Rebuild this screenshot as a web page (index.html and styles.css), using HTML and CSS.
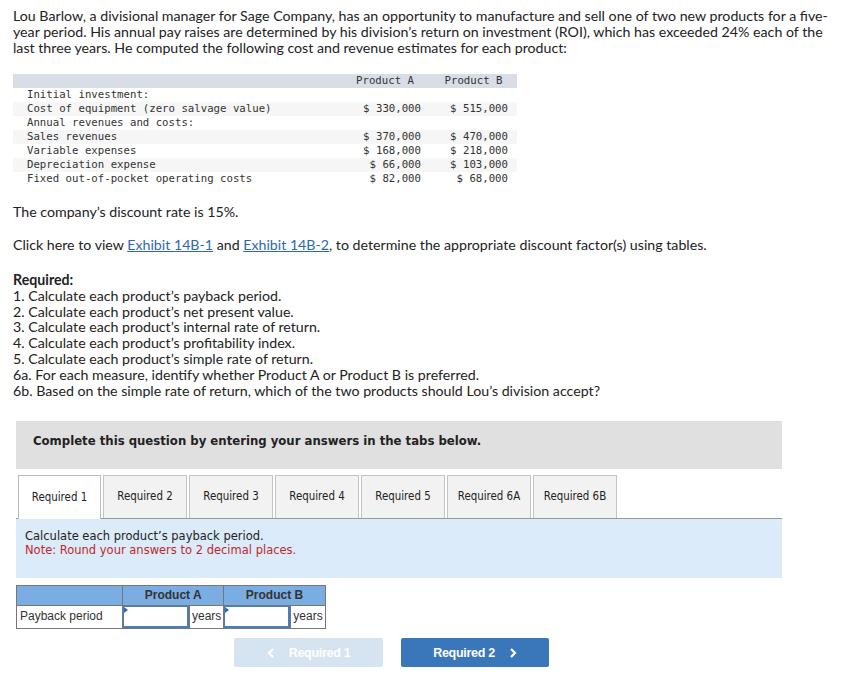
FILE: index.html
```html
<!DOCTYPE html>
<html lang="en">
<head>
<meta charset="utf-8">
<title>Payback period</title>
<link rel="stylesheet" href="styles.css">
</head>
<body>
<div class="page">
  <p class="intro">Lou Barlow, a divisional manager for Sage Company, has an opportunity to manufacture and sell one of two new products for a five-year period. His annual pay raises are determined by his division’s return on investment (ROI), which has exceeded 24% each of the last three years. He computed the following cost and revenue estimates for each product:</p>

  <table class="data">
    <colgroup><col class="c-label"><col class="c-a"><col class="c-b"></colgroup>
    <thead>
      <tr><th></th><th>Product A</th><th>Product B</th></tr>
    </thead>
    <tbody>
      <tr><td>Initial investment:</td><td></td><td></td></tr>
      <tr class="alt"><td>Cost of equipment (zero salvage value)</td><td class="num">$ 330,000</td><td class="num">$ 515,000</td></tr>
      <tr><td>Annual revenues and costs:</td><td></td><td></td></tr>
      <tr class="alt"><td>Sales revenues</td><td class="num">$ 370,000</td><td class="num">$ 470,000</td></tr>
      <tr><td>Variable expenses</td><td class="num">$ 168,000</td><td class="num">$ 218,000</td></tr>
      <tr class="alt"><td>Depreciation expense</td><td class="num">$ 66,000</td><td class="num">$ 103,000</td></tr>
      <tr><td>Fixed out-of-pocket operating costs</td><td class="num">$ 82,000</td><td class="num">$ 68,000</td></tr>
    </tbody>
  </table>

  <p class="rate">The company’s discount rate is 15%.</p>
  <p class="click">Click here to view <a href="#">Exhibit 14B-1</a> and <a href="#">Exhibit 14B-2</a>, to determine the appropriate discount factor(s) using tables.</p>

  <div class="required">
    <div class="req-title">Required:</div>
    <div>1. Calculate each product’s payback period.</div>
    <div>2. Calculate each product’s net present value.</div>
    <div>3. Calculate each product’s internal rate of return.</div>
    <div>4. Calculate each product’s profitability index.</div>
    <div>5. Calculate each product’s simple rate of return.</div>
    <div>6a. For each measure, identify whether Product A or Product B is preferred.</div>
    <div>6b. Based on the simple rate of return, which of the two products should Lou’s division accept?</div>
  </div>

  <div class="question">
    <div class="banner">Complete this question by entering your answers in the tabs below.</div>

    <div class="tabs">
      <div class="tab active">Required 1</div>
      <div class="tab">Required 2</div>
      <div class="tab">Required 3</div>
      <div class="tab">Required 4</div>
      <div class="tab">Required 5</div>
      <div class="tab">Required 6A</div>
      <div class="tab">Required 6B</div>
    </div>

    <div class="instructions">
      <div>Calculate each product’s payback period.</div>
      <div class="note">Note: Round your answers to 2 decimal places.</div>
    </div>

    <table class="answer">
      <thead>
        <tr><th class="a-label"></th><th colspan="2">Product A</th><th colspan="2">Product B</th></tr>
      </thead>
      <tbody>
        <tr>
          <td class="a-label">Payback period</td>
          <td class="a-input"><div class="field"><input type="text"></div></td>
          <td class="a-unit">years</td>
          <td class="a-input"><div class="field"><input type="text"></div></td>
          <td class="a-unit">years</td>
        </tr>
      </tbody>
    </table>

    <div class="nav">
      <button class="btn prev" type="button"><svg width="8" height="10" viewBox="0 0 8 10"><path d="M6 1 L2 5 L6 9" fill="none" stroke="#fff" stroke-width="2.2"/></svg><span>Required 1</span></button>
      <button class="btn next" type="button"><span>Required 2</span><svg width="8" height="10" viewBox="0 0 8 10"><path d="M2 1 L6 5 L2 9" fill="none" stroke="#fff" stroke-width="2.2"/></svg></button>
    </div>
  </div>
</div>
</body>
</html>
```

FILE: styles.css
```css
html, body {
  margin: 0;
  padding: 0;
  background: #fff;
}

.page {
  padding: 8px 10px 0 13px;
  font-family: Lato, "Open Sans", sans-serif;
  font-size: 14.2px;
  line-height: 15.8px;
  color: #222;
}

p {
  margin: 0;
}

.intro {
  margin-bottom: 19px;
}

.data {
  border-collapse: collapse;
  width: 504px;
  font-family: "DejaVu Sans Mono", "Liberation Mono", monospace;
  font-size: 10.7px;
  line-height: 14px;
  color: #333;
}

.data col.c-label { width: 327px; }
.data col.c-a { width: 90px; }
.data col.c-b { width: 87px; }

.data th {
  background: #d9dde6;
  font-weight: normal;
  height: 14px;
  padding: 0;
  text-align: center;
}

.data td {
  padding: 0;
  height: 14px;
  white-space: nowrap;
}

.data td:first-child {
  padding-left: 14px;
}

.data tr.alt td {
  background: #f6f6f6;
}

.data td.num {
  text-align: right;
  padding-right: 9px;
}

.rate {
  margin-top: 18px;
}

.click {
  margin-top: 17px;
}

.click a {
  color: #2e68b1;
  text-decoration: underline;
}

.required {
  margin-top: 19px;
}

.req-title {
  font-weight: bold;
}

.question {
  margin: 23px 0 0 3px;
  width: 766px;
}

.banner {
  background: #e0e0e0;
  height: 48px;
  box-sizing: border-box;
  padding: 12px 0 0 17px;
  font-family: "DejaVu Sans", Verdana, sans-serif;
  font-stretch: condensed;
  font-weight: bold;
  font-size: 13px;
  color: #222;
}

.tabs {
  display: flex;
  gap: 2px;
  margin-top: 6px;
  padding-left: 2px;
  border-bottom: 1px solid #999;
  font-family: "DejaVu Sans", Verdana, sans-serif;
  font-stretch: condensed;
  font-size: 11.4px;
  color: #222;
}

.tab {
  box-sizing: border-box;
  min-width: 84px;
  height: 43px;
  padding: 0 9px;
  display: flex;
  align-items: center;
  justify-content: center;
  background: #f2f2f2;
  border: 1px solid #c4c4c4;
  border-bottom: none;
  white-space: nowrap;
}

.tab.active {
  min-width: 83px;
  background: #fff;
  border-color: #bbb;
  margin-bottom: -1px;
  height: 44px;
}

.instructions {
  background: #dbebf9;
  height: 59px;
  box-sizing: border-box;
  padding: 11px 9px 0;
  font-family: "DejaVu Sans", Verdana, sans-serif;
  font-size: 11.5px;
  line-height: 13.5px;
  color: #222;
}

.instructions .note {
  color: #c1272d;
}

.answer {
  margin-top: 7px;
  border-collapse: collapse;
  font-family: "Liberation Sans", Arial, sans-serif;
  font-size: 12px;
  color: #333;
}

.answer th {
  background: #7aaee3;
  border: 1px solid #777;
  height: 19px;
  padding: 0;
  font-weight: bold;
  text-align: center;
}

.answer td {
  border: 1px solid #777;
  height: 20px;
  padding: 0;
}

.answer .a-label {
  width: 102px;
  padding-left: 3px;
  text-align: left;
}

.answer th.a-label {
  padding: 0;
  width: 105px;
}

.answer td.a-input {
  width: 65px;
  padding: 0;
}

.answer td.a-unit {
  padding: 0 2px;
  text-align: left;
}

.field {
  position: relative;
  height: 22px;
}

.field::before {
  content: "";
  position: absolute;
  left: 1px;
  top: 1px;
  border-left: 4px solid #2f6db5;
  border-top: 3px solid transparent;
  border-bottom: 3px solid transparent;
}

.field input {
  box-sizing: border-box;
  width: 66px;
  height: 22px;
  margin: 0;
  border: 2px solid #4a7ebb;
  border-top-width: 1px;
  border-left-width: 1px;
  outline: none;
  background: #fff;
  display: block;
}

.nav {
  display: flex;
  justify-content: center;
  gap: 18px;
  margin-top: 9px;
  padding-right: 15px;
}

.btn {
  width: 149px;
  height: 29px;
  border: none;
  border-radius: 2px;
  display: flex;
  align-items: center;
  justify-content: center;
  gap: 14px;
  font-family: "Liberation Sans", Arial, sans-serif;
  font-weight: bold;
  font-size: 12.5px;
  letter-spacing: -0.3px;
  color: #fff;
  padding: 0;
}

.btn.prev {
  background: #d6e3f1;
}

.btn.next {
  width: 148px;
  background: #3a76ba;
}
```
